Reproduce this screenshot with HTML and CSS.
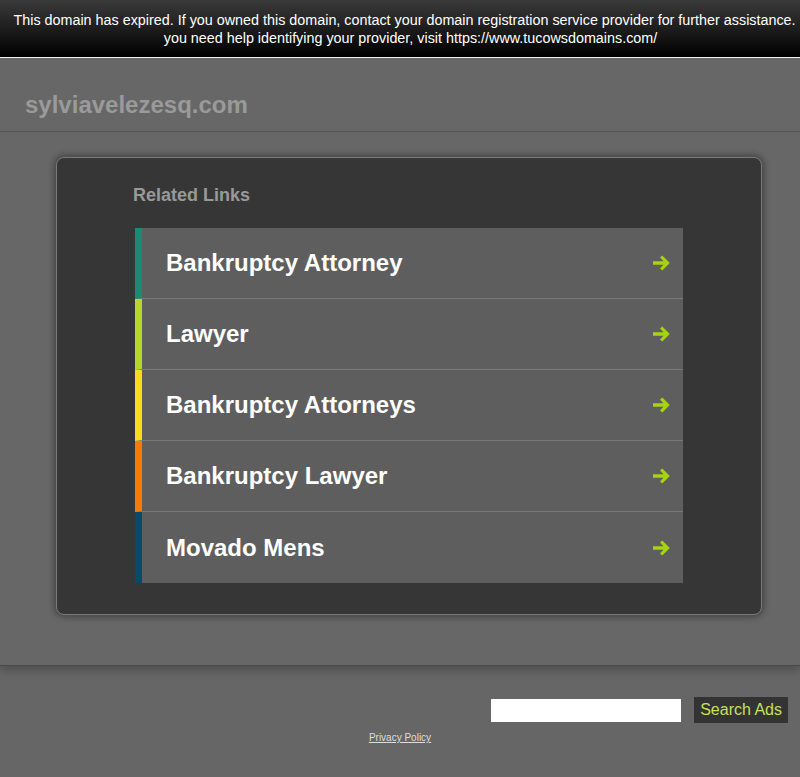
FILE: index.html
```html
<!DOCTYPE html>
<html lang="en">
<head>
    <meta charset="UTF-8">
    <title>sylviavelezesq.com</title>
    <link rel="stylesheet" href="styles.css">
</head>
<body>
    <div class="expired-bar">
        <p>This domain has expired. If you owned this domain, contact your domain registration service provider for further assistance. If<br>you need help identifying your provider, visit https://www.tucowsdomains.com/</p>
    </div>

    <div class="main">
        <div class="domain">sylviavelezesq.com</div>
        <div class="content">
            <div class="links-box">
                <h2>Related Links</h2>
                <ul class="links">
                    <li class="c1"><a href="#">Bankruptcy Attorney</a>
                        <svg class="arrow" viewBox="0 0 20 16"><path d="M1 6.2h10.5L8 2.6 10.3.4 17.8 8l-7.5 7.6L8 13.4l3.5-3.6H1z"/></svg></li>
                    <li class="c2"><a href="#">Lawyer</a>
                        <svg class="arrow" viewBox="0 0 20 16"><path d="M1 6.2h10.5L8 2.6 10.3.4 17.8 8l-7.5 7.6L8 13.4l3.5-3.6H1z"/></svg></li>
                    <li class="c3"><a href="#">Bankruptcy Attorneys</a>
                        <svg class="arrow" viewBox="0 0 20 16"><path d="M1 6.2h10.5L8 2.6 10.3.4 17.8 8l-7.5 7.6L8 13.4l3.5-3.6H1z"/></svg></li>
                    <li class="c4"><a href="#">Bankruptcy Lawyer</a>
                        <svg class="arrow" viewBox="0 0 20 16"><path d="M1 6.2h10.5L8 2.6 10.3.4 17.8 8l-7.5 7.6L8 13.4l3.5-3.6H1z"/></svg></li>
                    <li class="c5"><a href="#">Movado Mens</a>
                        <svg class="arrow" viewBox="0 0 20 16"><path d="M1 6.2h10.5L8 2.6 10.3.4 17.8 8l-7.5 7.6L8 13.4l3.5-3.6H1z"/></svg></li>
                </ul>
            </div>
        </div>
    </div>

    <div class="footer">
        <form class="search">
            <input type="text" class="search-input">
            <button type="submit">Search Ads</button>
        </form>
        <a href="#" class="privacy">Privacy Policy</a>
    </div>
</body>
</html>
```

FILE: styles.css
```css
body {
    margin: 0;
    padding: 0;
    background-color: #666;
    font-family: "Liberation Sans", Arial, sans-serif;
    overflow: hidden;
}

.expired-bar {
    height: 57px;
    background: linear-gradient(#3a3a3a, #000);
    border-bottom: 1px solid #fff;
    overflow: hidden;
}

.expired-bar p {
    width: 821px;
    margin: 0;
    padding-top: 11px;
    text-align: center;
    white-space: nowrap;
    color: #fff;
    font-size: 14.35px;
    line-height: 18px;
}

.main {
    background-color: #676767;
    border-bottom: 1px solid #4a4a4a;
    box-shadow: 0 4px 10px rgba(0, 0, 0, 0.25);
    position: relative;
}

.domain {
    height: 74px;
    padding-left: 25px;
    line-height: 93px;
    color: #9a9a9a;
    font-size: 24px;
    font-weight: bold;
    border-bottom: 1px solid #545454;
    box-sizing: border-box;
}

.content {
    padding: 25px 38px 50px 56px;
}

.links-box {
    background-color: #363636;
    border: 1px solid #7a7a7a;
    border-radius: 8px;
    box-shadow: 0 0 6px 2px rgba(0, 0, 0, 0.35);
    padding: 26px 78px 31px 76px;
}

.links-box h2 {
    margin: 0 0 22px 0;
    color: #999;
    font-size: 18px;
    line-height: 22px;
}

.links {
    list-style: none;
    margin: 0 0 0 2px;
    padding: 0;
}

.links li {
    display: flex;
    align-items: center;
    justify-content: space-between;
    height: 70px;
    background-color: #5e5e5e;
    border-left: 7px solid #1a8a73;
    border-bottom: 1px solid #787878;
    padding: 0 11px 0 24px;
}

.links li:last-child {
    border-bottom: none;
    height: 71px;
}

.links li.c2 { border-left-color: #b6d62e; }
.links li.c3 { border-left-color: #f7dc1e; }
.links li.c4 { border-left-color: #f57a06; }
.links li.c5 { border-left-color: #0b4a66; }

.links a {
    color: #fff;
    font-size: 24px;
    font-weight: bold;
    text-decoration: none;
}

.arrow {
    width: 20px;
    height: 16px;
    fill: #a6d40e;
}

.footer {
    text-align: center;
    padding-top: 31px;
}

.search {
    display: flex;
    justify-content: flex-end;
    align-items: center;
    padding-right: 12px;
}

.search-input {
    width: 190px;
    height: 23px;
    border: none;
    padding: 0;
    margin-right: 13px;
    background-color: #fff;
}

.search button {
    height: 26px;
    padding: 0 6px;
    background-color: #333;
    color: #c6e05a;
    border: none;
    font-family: "Liberation Sans", Arial, sans-serif;
    font-size: 16px;
}

.privacy {
    display: inline-block;
    margin-top: 9px;
    color: #ddd;
    font-size: 10px;
}
```
